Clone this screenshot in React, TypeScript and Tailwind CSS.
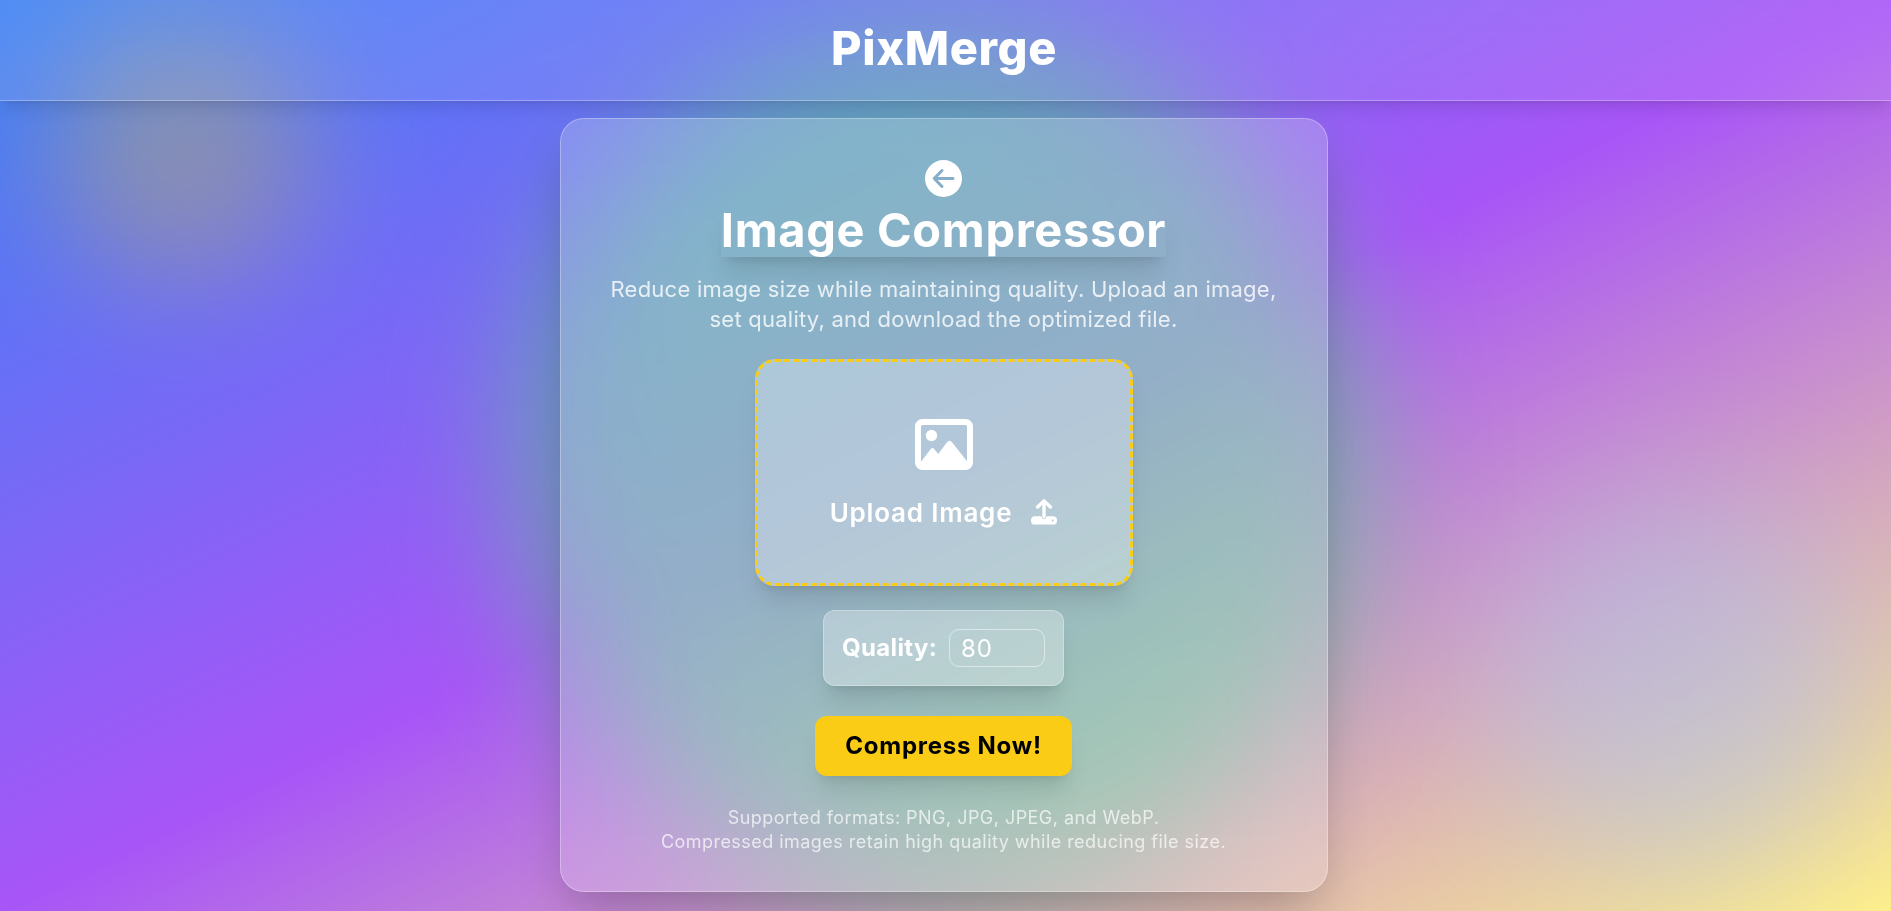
function BackIcon() {
  return (
    <svg viewBox="0 0 37 37" className="size-[37px]">
      <circle cx="18.5" cy="18.5" r="18.5" fill="white" />
      <path
        d="M17 10.5L9.2 18.5L17 26.5M9.5 18.5H28"
        fill="none"
        stroke="#86adc9"
        strokeWidth="3"
        strokeLinecap="round"
        strokeLinejoin="round"
      />
    </svg>
  );
}

function PictureIcon() {
  return (
    <svg viewBox="0 0 58 51" className="h-[51px] w-[58px]" fill="none">
      <rect x="3" y="3" width="52" height="45" rx="4.5" stroke="white" strokeWidth="6" />
      <circle cx="16.5" cy="16.5" r="5.7" fill="white" />
      <path
        d="M5 45V44L15.6 30.2Q17.5 28 19.4 30.2L23.2 35L31.8 23.4Q34.5 20.2 37.2 23.4L53 43.5V46H5Z"
        fill="white"
      />
    </svg>
  );
}

function UploadIcon() {
  return (
    <svg viewBox="0 0 26 26" className="size-[26px]" fill="none">
      <path
        d="M4 17.2H10.6V17.6Q10.6 20 13 20Q15.4 20 15.4 17.6V17.2H22Q26 17.2 26 21.4Q26 25.6 22 25.6H4Q0 25.6 0 21.4Q0 17.2 4 17.2ZM21.7 20.4A1 1 0 1 0 21.7 22.4A1 1 0 1 0 21.7 20.4Z"
        fill="white"
        fillRule="evenodd"
      />
      <path
        d="M6.6 8L13 1.9L19.4 8M13 2.2V17.6"
        stroke="white"
        strokeWidth="3.4"
        strokeLinecap="round"
        strokeLinejoin="round"
      />
    </svg>
  );
}

export default function App() {
  return (
    <div className="relative h-[911px] w-full overflow-hidden bg-linear-to-br/srgb from-[#3b82f6] via-[#a855f7] to-[#fef08a] font-['Inter',sans-serif] text-white">
      <div className="absolute left-[54px] top-[24px] size-64 rounded-full bg-[#facc15] opacity-30 blur-3xl" />
      <div className="absolute bottom-[34px] right-[22px] size-96 rounded-full bg-[#a5c3f5] opacity-45 blur-[72px]" />
      <div className="absolute left-[508px] top-[26px] size-[870px] rounded-full bg-[#4ade80] opacity-50 blur-3xl" />
      <div className="relative flex h-full flex-col items-center">
        <header className="flex h-[101px] w-full shrink-0 justify-center border-b border-white/30 bg-white/10 pr-[3px] pt-6 shadow-lg backdrop-blur-lg">
          <h1 className="h-12 text-[47px] leading-[48px] font-extrabold tracking-[0.6px]">PixMerge</h1>
        </header>
        <main className="mt-[17px] mr-[3px] flex h-[774px] w-[768px] shrink-0 flex-col items-center rounded-3xl border border-white/30 bg-white/20 pt-[41px] pr-px whitespace-nowrap shadow-2xl backdrop-blur-xl">
          <button aria-label="Back" className="h-[37px]">
            <BackIcon />
          </button>
          <h2 className="mt-3 h-12 text-[47px] leading-[42px] font-bold tracking-[0.65px] shadow-xl">
            Image Compressor
          </h2>
          <div className="mt-[17px] text-center text-[22px] leading-[30px] tracking-[0.24px] text-white/80">
            <p>Reduce image size while maintaining quality. Upload an image,</p>
            <p>set quality, and download the optimized file.</p>
          </div>
          <label className="mt-[25px] flex h-[227px] w-[378px] flex-col items-center rounded-[20px] border-3 border-dashed border-[#facc15] bg-white/30 pt-[57px] shadow-xl">
            <PictureIcon />
            <span className="mt-6 flex h-9 items-center gap-[19px] text-[26px] font-semibold tracking-[0.8px]">
              Upload Image <UploadIcon />
            </span>
          </label>
          <div className="mt-6 flex h-[76px] w-[241px] items-center justify-between rounded-xl border border-white/30 bg-white/30 px-[18px] shadow-xl">
            <span className="text-2xl font-bold tracking-[0.35px]">Quality:</span>
            <input
              defaultValue="80"
              className="h-[38px] w-[96px] rounded-[10px] border border-white/50 bg-transparent px-[11px] text-2xl tracking-[0.8px] outline-none"
            />
          </div>
          <button className="mt-[30px] h-[60px] w-[257px] rounded-xl bg-[#facc15] text-2xl font-bold tracking-[0.75px] text-black shadow-xl">
            Compress Now!
          </button>
          <div className="mt-[30px] text-center text-[18px] leading-6 tracking-[0.46px] text-white/70">
            <p>Supported formats: PNG, JPG, JPEG, and WebP.</p>
            <p>Compressed images retain high quality while reducing file size.</p>
          </div>
        </main>
      </div>
    </div>
  );
}
